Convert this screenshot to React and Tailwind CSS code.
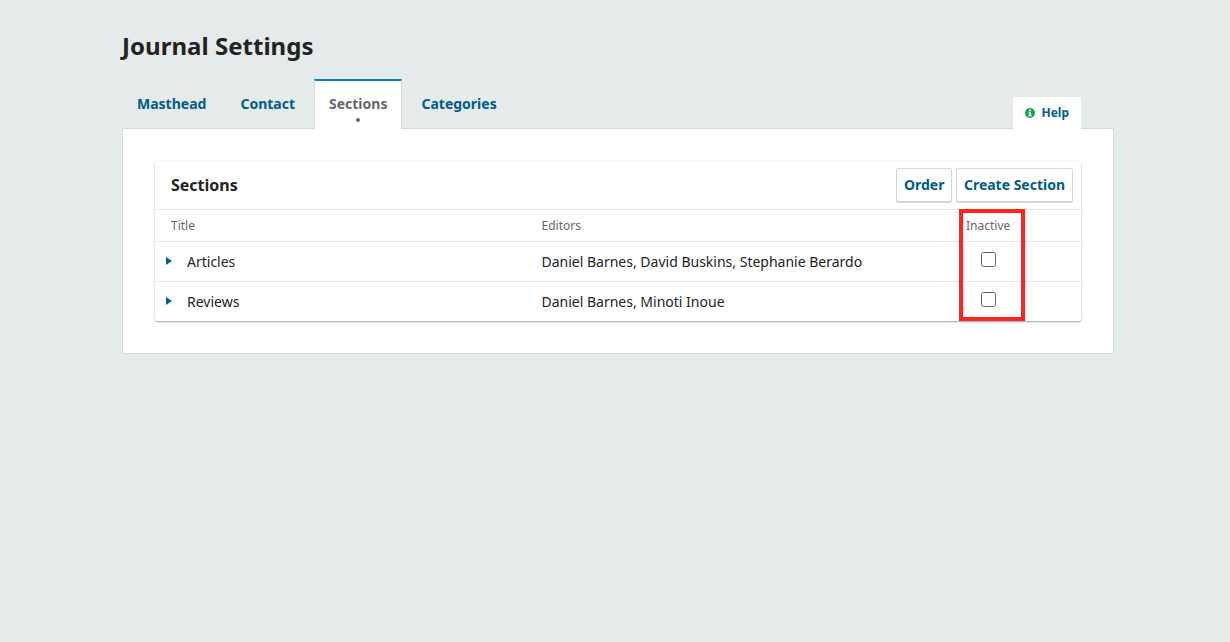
import React from "react";

const rows = [
  { title: "Articles", editors: "Daniel Barnes, David Buskins, Stephanie Berardo" },
  { title: "Reviews", editors: "Daniel Barnes, Minoti Inoue" },
];

function Tab({ label, active }) {
  if (active) {
    return (
      <button className="relative h-[50px] border-x border-t-2 border-x-[#d9dadb] border-t-[#0b7dc0] bg-white px-[14px] text-[14px] leading-[46px] font-bold text-[#666]">
        <span className="block h-[48px]">{label}</span>
        <span className="absolute top-[37px] left-1/2 size-1 -translate-x-1/2 rounded-full bg-[#666]" />
      </button>
    );
  }
  return (
    <button className="h-[50px] px-[15px] pt-[2px] text-[14px] leading-[46px] font-bold text-[#005c8c]">
      <span className="block h-[48px]">{label}</span>
    </button>
  );
}

function ActionButton({ children }) {
  return (
    <button className="h-[34px] rounded-[2px] border border-[#d5d6d7] bg-white px-[7px] text-[14px] leading-[32px] font-bold tracking-[-0.01px] whitespace-nowrap text-[#005c8c] shadow-[0_1px_0_#d5d6d7]">
      {children}
    </button>
  );
}

function InfoIcon() {
  return (
    <svg className="size-[10px]" viewBox="0 0 10 10">
      <circle cx="5" cy="5" r="5" fill="#12a84c" />
      <path d="M4.1 1.5h1.7v1.5H4.1zM3.4 3.8h2.4v3.2h.8v1.2H3.4V7h.8V5h-.8z" fill="#fff" />
    </svg>
  );
}

export default function App() {
  return (
    <div className="min-h-screen bg-[#e5eaeb] pt-[30px] pl-[122px] font-['Noto_Sans',sans-serif] text-[#222]">
      <main className="w-[992px]">
        <h1 className="h-[49px] text-[24px] leading-[32px] font-bold tracking-[0.03px]">Journal Settings</h1>
        <div className="relative z-10 -mb-px flex h-[50px] items-end">
          <nav className="flex flex-1 gap-[4px]">
            <Tab label="Masthead" />
            <Tab label="Contact" />
            <Tab label="Sections" active />
            <Tab label="Categories" />
          </nav>
          <button className="mr-[33px] flex h-[32px] w-[68px] items-center gap-[6.5px] rounded-t-[2px] bg-white pl-[12px] text-[12px] font-bold text-[#005c8c]">
            <InfoIcon />
            Help
          </button>
        </div>
        <section className="h-[226px] rounded-b-[2px] border border-[#d5d7d8] bg-white px-[32px] pt-[32px]">
          <div className="relative h-[160px] rounded-[2px] shadow-[0_0_1px_rgba(0,0,0,0.12),0_1px_2px_rgba(0,0,0,0.35)]">
            <header className="flex h-[49px] items-start gap-[3.5px] border-b border-[#e6e7e8] pt-[7px] pr-[8px] pl-[16px]">
              <h2 className="flex-1 text-[16px] leading-[34px] font-bold">Sections</h2>
              <ActionButton>Order</ActionButton>
              <ActionButton>Create Section</ActionButton>
            </header>
            <div className="grid h-[32px] grid-cols-[386.5px_424.5px_1fr] border-b border-[#e6e7e8] text-[12px] leading-[32px] text-[#666]">
              <div className="pl-[16px]">Title</div>
              <div>Editors</div>
              <div>Inactive</div>
            </div>
            {rows.map((row) => (
              <div
                key={row.title}
                className="grid h-[40px] grid-cols-[386.5px_424.5px_1fr] border-b border-[#e6e7e8] text-[14px] leading-[40px] last-of-type:border-0"
              >
                <div className="flex pl-[11px]">
                  <svg className="mt-[15px] mr-[15px] h-[8px] w-[6px]" viewBox="0 0 6 8">
                    <path d="M0 0L6 4L0 8Z" fill="#005c8c" />
                  </svg>
                  {row.title}
                </div>
                <div>{row.editors}</div>
                <div className="pt-[10px] pl-[15px]">
                  <span
                    role="checkbox"
                    aria-checked="false"
                    className="block size-[15px] rounded-[2.5px] border border-[#666] bg-white"
                  />
                </div>
              </div>
            ))}
            <span className="absolute top-[48px] left-[804px] h-[112px] w-[66px] border-4 border-[#ff2419]" />
          </div>
        </section>
      </main>
    </div>
  );
}
